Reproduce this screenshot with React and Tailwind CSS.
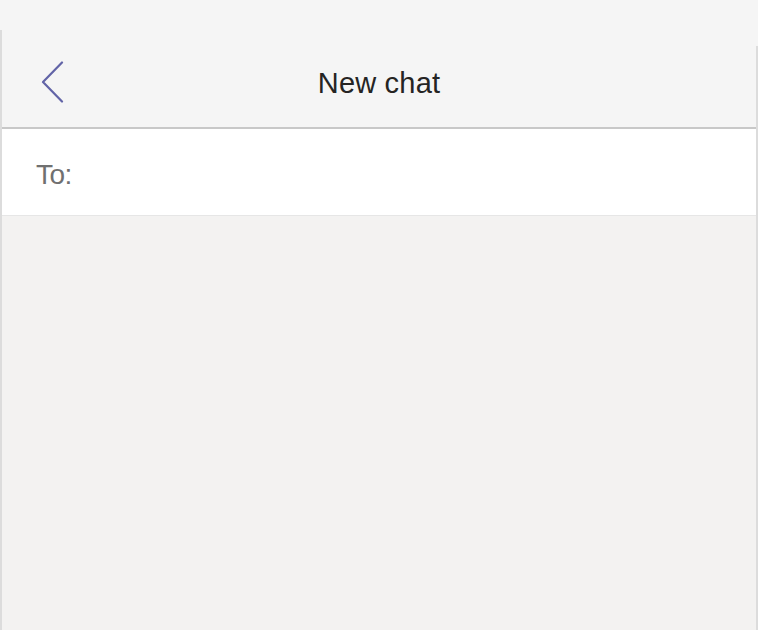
import React from 'react';

export default function App() {
  return (
    <div className="h-[630px] w-[758px] overflow-hidden bg-[#f5f5f5] pt-[30px] font-['Liberation_Sans',Arial,sans-serif]">
      <div className="relative flex h-full flex-col border-l-2 border-r-2 border-[#dcdcdc]">
        {/* right edge of the frame begins a little lower */}
        <div className="absolute right-[-2px] top-0 h-[16px] w-[2px] bg-[#f5f5f5]" />
        {/* header */}
        <div className="relative flex h-[99px] shrink-0 items-center justify-center border-b-2 border-[#c8c8c8] bg-[#f5f5f5]">
          <button className="absolute left-[35px] top-[30px] flex h-[44px] w-[30px] items-center justify-center">
            <svg width="24" height="42" viewBox="0 0 24 42" fill="none">
              <path d="M22 1.5 L3 21 L22 40.5" stroke="#6264a7" strokeWidth="2.2" strokeLinecap="round" strokeLinejoin="round" />
            </svg>
          </button>
          <h1 className="mt-[10px] text-[29px] tracking-[0.2px] text-[#252423]">New chat</h1>
        </div>
        {/* recipients */}
        <div className="flex h-[87px] shrink-0 items-center border-b border-[#e6e6e6] bg-white pl-[34px]">
          <span className="mt-[6px] text-[28px] tracking-[-0.5px] text-[#707070]">To:</span>
        </div>
        {/* body */}
        <div className="flex-1 bg-[#f3f2f1]" />
      </div>
    </div>
  );
}
